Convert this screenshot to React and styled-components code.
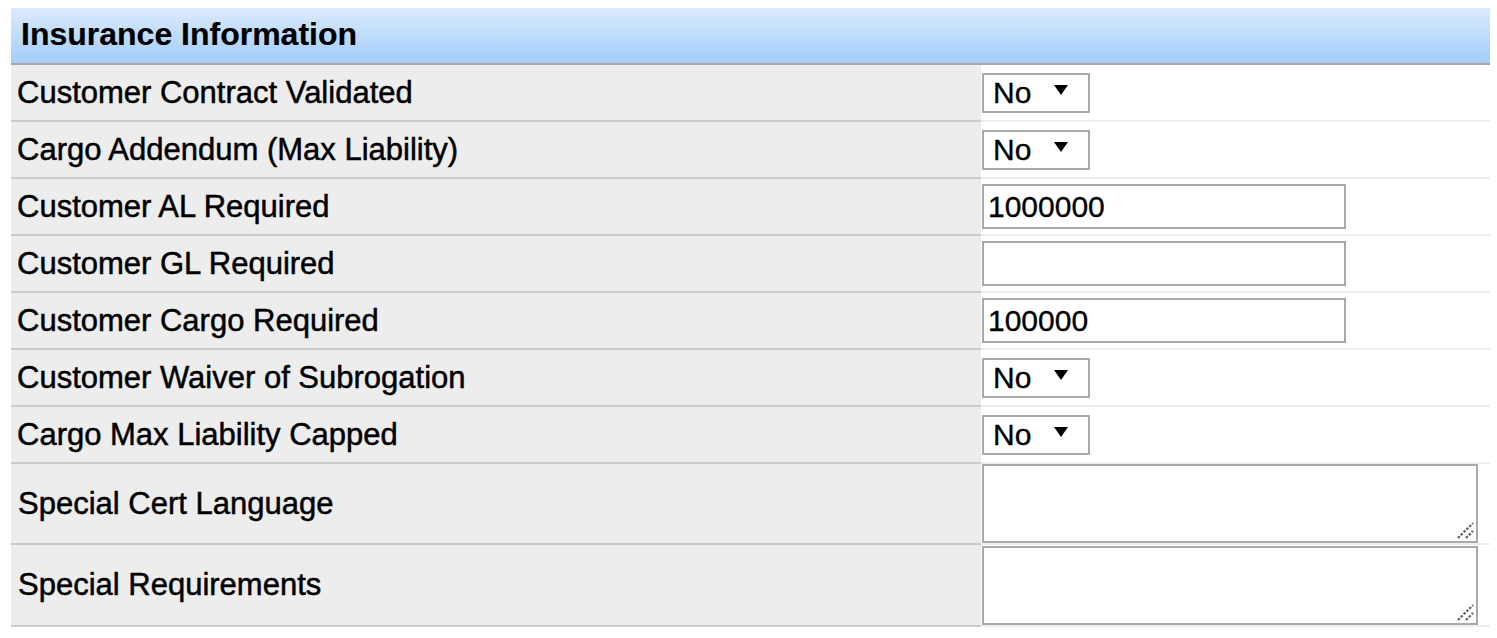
import React from 'react'
import styled, { createGlobalStyle } from 'styled-components'

const GlobalStyle = createGlobalStyle`
  html, body {
    margin: 0;
    padding: 0;
    background: #fff;
  }
  body {
    font-family: "Liberation Sans", Arial, sans-serif;
    color: #000;
  }
`

const Page = styled.div`
  padding: 8px 0 0 11px;
`

const Panel = styled.div`
  width: 1479px;
  display: grid;
  grid-template-columns: 970px 509px;
`

const Header = styled.div`
  grid-column: 1 / -1;
  height: 57px;
  display: flex;
  align-items: center;
  padding: 0 0 3px 10px;
  box-sizing: border-box;
  background: linear-gradient(to bottom, #dbeafd 0%, #a3cdfa 100%);
  border-bottom: 2px solid #a9a9a9;
  font-size: 32px;
  font-weight: bold;
  -webkit-text-stroke: 0.2px #000;
`

const LabelCell = styled.div`
  height: ${p => p.$h}px;
  display: flex;
  align-items: center;
  padding-left: ${p => p.$pad || 6}px;
  background: #ededed;
  border-bottom: 2px solid #cccccc;
  font-size: 31px;
  -webkit-text-stroke: 0.5px #000;
  white-space: nowrap;
`

const ValueCell = styled.div`
  height: ${p => p.$h}px;
  display: flex;
  align-items: center;
  padding-left: 1px;
  background: #fff;
  border-bottom: 2px solid #eeeeee;
`

const SelectWrap = styled.div`
  position: relative;
  width: 108px;
  height: 40px;
`

const Select = styled.select`
  appearance: none;
  -webkit-appearance: none;
  width: 100%;
  height: 100%;
  box-sizing: border-box;
  border: 2px solid #a9a9a9;
  border-radius: 1px;
  background: #fff;
  padding: 0 0 0 9px;
  margin: 0;
  font-family: "Liberation Sans", Arial, sans-serif;
  font-size: 30px;
  color: #000;
  -webkit-text-stroke: 0.35px #000;
  outline: none;
`

const Arrow = styled.span`
  position: absolute;
  left: 72px;
  top: 12px;
  width: 0;
  height: 0;
  border-left: 7.5px solid transparent;
  border-right: 7.5px solid transparent;
  border-top: 10px solid #000;
  pointer-events: none;
`

const TextInput = styled.input`
  width: 364px;
  height: 45px;
  box-sizing: border-box;
  border: 2px solid #a9a9a9;
  margin: 0;
  padding: 0 0 0 4px;
  font-family: "Liberation Sans", Arial, sans-serif;
  font-size: 30px;
  color: #000;
  -webkit-text-stroke: 0.35px #000;
  outline: none;
`

const AreaWrap = styled.div`
  position: relative;
  width: 496px;
  height: 79px;
`

const TextArea = styled.textarea`
  display: block;
  width: 100%;
  height: 100%;
  box-sizing: border-box;
  border: 2px solid #a9a9a9;
  margin: 0;
  padding: 4px;
  resize: none;
  font-family: "Liberation Sans", Arial, sans-serif;
  font-size: 30px;
  outline: none;
`

const Grip = styled.svg`
  position: absolute;
  right: 4px;
  bottom: 4px;
  width: 17px;
  height: 17px;
  pointer-events: none;
`

const ResizeGrip = () => (
  <Grip viewBox="0 0 17 17">
    <path d="M1 16 L16 1" stroke="#5e5e5e" strokeWidth="2.2" strokeDasharray="2.5 1.5" />
    <path d="M9 16 L16 9" stroke="#5e5e5e" strokeWidth="2.2" strokeDasharray="2.5 1.5" />
  </Grip>
)

const rows = [
  { label: 'Customer Contract Validated', type: 'select', value: 'No' },
  { label: 'Cargo Addendum (Max Liability)', type: 'select', value: 'No' },
  { label: 'Customer AL Required', type: 'input', value: '1000000' },
  { label: 'Customer GL Required', type: 'input', value: '' },
  { label: 'Customer Cargo Required', type: 'input', value: '100000' },
  { label: 'Customer Waiver of Subrogation', type: 'select', value: 'No' },
  { label: 'Cargo Max Liability Capped', type: 'select', value: 'No' },
  { label: 'Special Cert Language', type: 'area', value: '', h: 79 },
  { label: 'Special Requirements', type: 'area', value: '', h: 80 },
]

const Field = ({ row }) => {
  if (row.type === 'select') {
    return (
      <SelectWrap>
        <Select defaultValue={row.value}>
          <option value="No">No</option>
          <option value="Yes">Yes</option>
        </Select>
        <Arrow />
      </SelectWrap>
    )
  }
  if (row.type === 'input') {
    return <TextInput type="text" defaultValue={row.value} />
  }
  return (
    <AreaWrap>
      <TextArea defaultValue={row.value} />
      <ResizeGrip />
    </AreaWrap>
  )
}

const App = () => {
  return (
    <Page>
      <GlobalStyle />
      <Panel>
        <Header>Insurance Information</Header>
        {rows.map(row => (
          <React.Fragment key={row.label}>
            <LabelCell $h={row.h || 55} $pad={row.type === 'area' ? 7 : 6}>
              {row.label}
            </LabelCell>
            <ValueCell $h={row.h || 55}>
              <Field row={row} />
            </ValueCell>
          </React.Fragment>
        ))}
      </Panel>
    </Page>
  )
}

export default App
